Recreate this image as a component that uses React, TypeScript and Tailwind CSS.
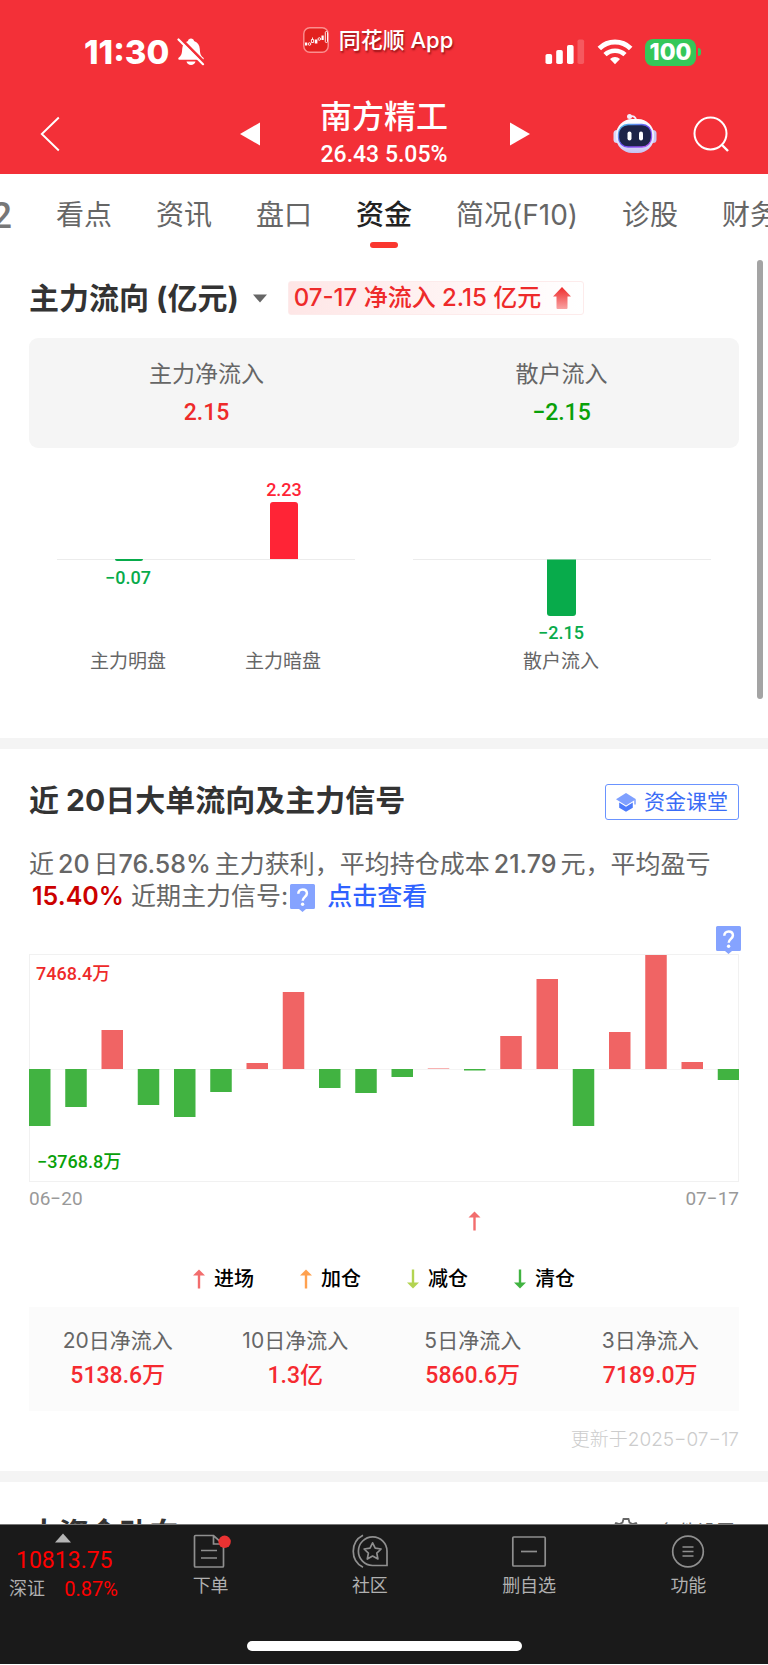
import React from "react";

const UI = "font-['Inter','Noto_Sans_CJK_SC',sans-serif]";
const NUM = "font-['Roboto','Noto_Sans_CJK_SC',sans-serif]";

/* ---------- icons ---------- */

function BellOff() {
  return (
    <svg width="28" height="30" viewBox="0 0 28 30" aria-hidden="true">
      <path
        d="M14 1.6c1.6 0 2.7.9 3 2.3 3.6 1.1 5.6 4 5.8 8 .2 4.600.9 6.800 3.600 8.900.6.5.4 1.900-.6 1.900H2.200c-1 0-1.200-1.400-.6-1.900 2.700-2.100 3.400-4.300 3.600-8.900.2-4 2.200-6.900 5.800-8 .3-1.400 1.400-2.300 3-2.300z"
        fill="#fff"
      />
      <path d="M9.500 24.500h9c-.6 2.200-2.200 3.600-4.500 3.600s-3.900-1.400-4.500-3.600z" fill="#fff" />
      <path d="M3.500 1.500 29 27" stroke="#f33038" strokeWidth="3" />
      <path d="M1.500 2.500 26 27.200" stroke="#fff" strokeWidth="2.200" strokeLinecap="round" />
    </svg>
  );
}

function AppLogo() {
  return (
    <svg width="26" height="26" viewBox="0 0 26 26" aria-hidden="true">
      <rect x="0.800" y="0.800" width="24.400" height="24.400" rx="6" fill="#e2211f" stroke="#fb8f8f" strokeWidth="1.400" />
      <g fill="#fff">
        <rect x="2" y="15.500" width="2.200" height="3" />
        <rect x="11.800" y="12.500" width="2.600" height="4" />
        <rect x="18.500" y="8.500" width="2.200" height="4.500" />
      </g>
      <g fill="none" stroke="#fff" strokeWidth="0.900">
        <circle cx="6.500" cy="17" r="1.300" />
        <path d="M9.500 10.500v1.500M8.400 12.500h2.200v3H8.400z" />
        <circle cx="16.300" cy="12" r="1.300" />
        <rect x="22.300" y="4.500" width="2.200" height="11" rx="1" />
      </g>
    </svg>
  );
}

function Signal() {
  return (
    <svg width="40" height="26" viewBox="0 0 40 26" fill="#fff" aria-hidden="true">
      <rect x="0.500" y="15" width="6.600" height="10" rx="1.800" />
      <rect x="11.200" y="11" width="6.600" height="14" rx="1.800" />
      <rect x="22" y="6" width="6.600" height="19" rx="1.800" />
      <rect x="32.500" y="0.500" width="6.600" height="24.500" rx="1.800" opacity="0.200" />
    </svg>
  );
}

function Wifi() {
  return (
    <svg width="36" height="26" viewBox="0 0 36 26" aria-hidden="true">
      <path d="M2.300 9.500a22.500 22.500 0 0 1 31.400 0" fill="none" stroke="#fff" strokeWidth="5" />
      <path d="M8 15.700a14.500 14.500 0 0 1 20 0" fill="none" stroke="#fff" strokeWidth="4.600" />
      <path d="M18 25.200l-5-5.200a7.200 7.200 0 0 1 10 0z" fill="#fff" />
    </svg>
  );
}

function Robot() {
  return (
    <svg width="44" height="42" viewBox="0 0 44 42" aria-hidden="true">
      <defs>
        <linearGradient id="shell" x1="0" y1="0" x2="0" y2="1">
          <stop offset="0" stopColor="#ffffff" />
          <stop offset="0.600" stopColor="#ecebff" />
          <stop offset="1" stopColor="#c5c3f3" />
        </linearGradient>
        <linearGradient id="rim" x1="0" y1="0" x2="1" y2="1">
          <stop offset="0" stopColor="#4fc8e8" />
          <stop offset="0.500" stopColor="#6a4cf0" />
          <stop offset="1" stopColor="#b25af2" />
        </linearGradient>
      </defs>
      <path d="M17 3.500c3-1 5.500 0 6.300 4" fill="none" stroke="#f3eefc" strokeWidth="1.800" />
      <circle cx="16.500" cy="3.500" r="2.500" fill="#f3eefc" />
      <rect x="0.500" y="17" width="7" height="13" rx="3.500" fill="#d9d8f8" />
      <rect x="36.500" y="17" width="7" height="13" rx="3.500" fill="#c9c7f2" />
      <rect x="3" y="6" width="38" height="34" rx="16" fill="url(#shell)" />
      <rect x="5.500" y="11.500" width="33" height="22.500" rx="9.500" fill="#1d2448" stroke="url(#rim)" strokeWidth="1.300" />
      <rect x="14.500" y="18.500" width="4" height="9" rx="2" fill="#fff" />
      <rect x="26" y="18.500" width="4" height="9" rx="2" fill="#fff" />
    </svg>
  );
}

function HelpBubble() {
  return (
    <svg width="25" height="28" viewBox="0 0 25 28" aria-hidden="true" className="block">
      <path d="M1.500 0h22a1.500 1.500 0 0 1 1.500 1.500v22a1.500 1.500 0 0 1-1.500 1.500H16l-3.500 3L9 25H1.500A1.500 1.500 0 0 1 0 23.500v-22A1.500 1.500 0 0 1 1.500 0z" fill="#85a3ff" />
      <path d="M8.300 9.800c0-2.500 1.800-4.300 4.300-4.300s4.300 1.600 4.300 4c0 3.200-4.200 3.600-4.200 7.200" fill="none" stroke="#fff" strokeWidth="2.500" />
      <circle cx="12.600" cy="20.200" r="1.700" fill="#fff" />
    </svg>
  );
}

function Cap() {
  return (
    <svg width="20" height="19" viewBox="0 0 20 19" aria-hidden="true">
      <path d="M10 0 20 6.200 10 12.400 0 6.200z" fill="#7fa0ff" />
      <path d="M3.200 9.500 10 13.700l6.800-4.200v5.300L10 18.800l-6.800-4z" fill="#4d7bfb" />
      <path d="M19 6.500v5" stroke="#7fa0ff" strokeWidth="1.500" />
    </svg>
  );
}

function SignalArrow({ color, down = false }: { color: string; down?: boolean }) {
  return (
    <svg width="12" height="20" viewBox="0 0 12 20" aria-hidden="true">
      <g transform={down ? "rotate(180 6 10)" : undefined} fill={color}>
        <path d="M6 0.500 12 6.500H0z" />
        <rect x="4.800" y="5" width="2.400" height="14.500" />
      </g>
    </svg>
  );
}

function OrderIcon() {
  return (
    <svg width="40" height="36" viewBox="0 0 40 36" aria-hidden="true">
      <g fill="none" stroke="#8f8f8f" strokeWidth="1.700">
        <path d="M22.500 2.500H4.500a1 1 0 0 0-1 1V33a1 1 0 0 0 1 1h27a1 1 0 0 0 1-1V11.500zM22.500 2.500v8.500h9.500" />
        <path d="M10 17.500h16M10 25h16" />
      </g>
      <circle cx="33.600" cy="8.800" r="6.200" fill="#ea3232" />
    </svg>
  );
}

function CommunityIcon() {
  return (
    <svg width="40" height="36" viewBox="0 0 40 36" aria-hidden="true" fill="none" stroke="#8f8f8f" strokeWidth="1.700">
      <path d="M13 2.200a18 18 0 0 0 0 32" />
      <path d="M37 32.500H22.500a14.300 14.300 0 1 1 14.500-14.300z" />
      <path d="m22.600 9.800 2.600 5.400 5.900.8-4.300 4.100 1.100 5.900-5.300-2.900-5.300 2.900 1.100-5.900-4.300-4.100 5.900-.8z" strokeLinejoin="round" />
    </svg>
  );
}

function RemoveIcon() {
  return (
    <svg width="40" height="36" viewBox="0 0 40 36" aria-hidden="true" fill="none" stroke="#8f8f8f" strokeWidth="1.700">
      <rect x="3.800" y="4" width="32.400" height="29" rx="1" />
      <path d="M12 18.500h16" />
    </svg>
  );
}

function MenuIcon() {
  return (
    <svg width="40" height="36" viewBox="0 0 40 36" aria-hidden="true" fill="none" stroke="#8f8f8f" strokeWidth="1.700">
      <circle cx="20" cy="18.500" r="15.300" />
      <path d="M14.500 14h11M14.500 18.500h11M14.500 23h11" />
    </svg>
  );
}

/* ---------- data ---------- */

const tabs = ["看点", "资讯", "盘口", "资金", "简况(F10)", "诊股", "财务"];

// Daily large-order net flow, as chart units above (+) or below (-) the zero line.
const flows = [-57, -38, 39, -36, -48, -23, 6, 77, -19, -24, -8, 0.5, -1.5, 33, 90, -57, 37, 114, 7, -11];

const legend = [
  { label: "进场", color: "#f26d6d", down: false },
  { label: "加仓", color: "#ffa14f", down: false },
  { label: "减仓", color: "#b3d452", down: true },
  { label: "清仓", color: "#41b341", down: true },
];

const totals = [
  { label: "20日净流入", value: "5138.6万" },
  { label: "10日净流入", value: "1.3亿" },
  { label: "5日净流入", value: "5860.6万" },
  { label: "3日净流入", value: "7189.0万" },
];

const navItems = [
  { label: "下单", Icon: OrderIcon },
  { label: "社区", Icon: CommunityIcon },
  { label: "删自选", Icon: RemoveIcon },
  { label: "功能", Icon: MenuIcon },
];

/* ---------- sections ---------- */

function Header() {
  return (
    <header className="bg-[#f33038] text-white">
      <div className="grid h-[88px] grid-cols-[1fr_auto_1fr]">
        <div className="mt-9 flex h-8 items-center gap-2 pl-[84px]">
          <span className="text-[33px] leading-8 font-extrabold">11:30</span>
          <BellOff />
        </div>
        <div className="mt-6 flex h-8 items-center gap-[10px] pr-3">
          <AppLogo />
          <span className="text-[22px] leading-8 font-medium [text-shadow:1px_2px_2px_rgba(90,0,0,0.6)]">同花顺 App</span>
        </div>
        <div className="mt-9 flex h-8 items-center justify-end gap-3 pr-[67px]">
          <Signal />
          <Wifi />
          <div className="flex items-center gap-[2px]">
            <span className="flex h-[27px] w-[51px] items-center justify-center rounded-lg bg-[#34c759] text-[23px] leading-[27px] font-extrabold">
              100
            </span>
            <span className="h-2 w-[3px] rounded-r-full bg-[#34c759]" />
          </div>
        </div>
      </div>
      <div className="grid h-[86px] grid-cols-[1fr_auto_1fr] items-center pt-[6px]">
        <div className="flex items-center justify-between pr-[60px] pl-10">
          <button aria-label="返回">
            <svg width="20" height="36" viewBox="0 0 20 36" fill="none" stroke="#fff" strokeWidth="1.900" className="block">
              <path d="M18.800 1.500 1.800 18l17 16.500" />
            </svg>
          </button>
          <button aria-label="上一只">
            <svg width="20" height="24" viewBox="0 0 20 24" className="block">
              <path d="M0 12 20 0.500v23z" fill="#fff" />
            </svg>
          </button>
        </div>
        <div className="flex flex-col items-center gap-[2px]">
          <h1 className="text-[32px] leading-10 font-medium">南方精工</h1>
          <p className={`text-[23px] leading-8 font-medium ${NUM}`}>26.43 5.05%</p>
        </div>
        <div className="flex items-center pr-[38px] pl-[62px]">
          <button aria-label="下一只">
            <svg width="20" height="24" viewBox="0 0 20 24" className="block">
              <path d="M20 12 0 0.500v23z" fill="#fff" />
            </svg>
          </button>
          <button aria-label="智能助手" className="ml-auto">
            <Robot />
          </button>
          <button aria-label="搜索" className="ml-9">
            <svg width="37" height="37" viewBox="0 0 37 37" fill="none" stroke="#fff" strokeWidth="2" className="block">
              <circle cx="17.500" cy="17.500" r="16" />
              <path d="m28.500 28.500 6.500 6.500" strokeWidth="2.400" />
            </svg>
          </button>
        </div>
      </div>
    </header>
  );
}

function Tabs() {
  return (
    <nav className="flex h-[83px] gap-11 overflow-hidden whitespace-nowrap text-[28px] leading-9 text-[#666]">
      <a href="#l2" className={`-ml-11 w-14 shrink-0 pt-[22px] text-right text-4xl font-medium text-[#777] ${NUM}`}>
        L2
      </a>
      {tabs.map((t) => (
        <a
          key={t}
          href={`#${t}`}
          className={
            t === "资金"
              ? "flex shrink-0 flex-col items-center pt-[23px] font-medium text-[#222]"
              : "shrink-0 pt-[23px]"
          }
        >
          {t}
          {t === "资金" && <span className="mt-[9px] h-[6px] w-7 rounded-full bg-[#fa372f]" />}
        </a>
      ))}
    </nav>
  );
}

function MainFlow() {
  return (
    <section className="px-[29px] pt-6 pb-[54px]">
      <div className="flex h-[34px] items-center">
        <h2 className="text-[30px] leading-[34px] font-bold text-[#333]">主力流向 (亿元)</h2>
        <button aria-label="切换单位" className="ml-[14px]">
          <svg width="14" height="9" viewBox="0 0 14 9" className="block">
            <path d="M0 0.500h14L7 8.500z" fill="#666" />
          </svg>
        </button>
        <div className="ml-[21px] flex h-[34px] items-center gap-3 rounded-[3px] border border-[#fdebeb] bg-linear-to-r from-[#fee6e6] to-white pr-3 pl-[5px] text-[#ee2a2a]">
          <span className="text-2xl leading-8 font-medium">07-17 净流入 2.15 亿元</span>
          <svg width="18" height="22" viewBox="0 0 18 22" aria-hidden="true">
            <defs>
              <linearGradient id="up" x1="0" y1="0" x2="0" y2="1">
                <stop offset="0" stopColor="#ee2a2a" />
                <stop offset="1" stopColor="#f9a3a3" />
              </linearGradient>
            </defs>
            <path d="M9 0 18 9.500h-3.500V21a1 1 0 0 1-1 1h-9a1 1 0 0 1-1-1V9.500H0z" fill="url(#up)" />
          </svg>
        </div>
      </div>

      <dl className="mt-[23px] grid h-[110px] grid-cols-2 rounded-[9px] bg-[#f5f5f5] pt-5 text-center">
        <div>
          <dt className="text-[23px] leading-8 text-[#666]">主力净流入</dt>
          <dd className={`mt-[7px] text-[23px] leading-8 font-medium text-[#ee2a2a] ${NUM}`}>2.15</dd>
        </div>
        <div>
          <dt className="text-[23px] leading-8 text-[#666]">散户流入</dt>
          <dd className={`mt-[7px] text-[23px] leading-8 font-medium text-[#09a009] ${NUM}`}>−2.15</dd>
        </div>
      </dl>

      <svg viewBox="0 0 710 236" className={`block w-full ${NUM}`} role="img" aria-label="主力与散户流向">
        <path d="M28 111.500h298M384 111.500h298" stroke="#ececec" />
        <path d="M86 111h28v0a2 2 0 0 1-2 2H88a2 2 0 0 1-2-2z" fill="#08ab4b" />
        <path d="M241 111V57a3 3 0 0 1 3-3h22a3 3 0 0 1 3 3v54z" fill="#ff2436" />
        <path d="M518 111.500h29V165a3 3 0 0 1-3 3h-23a3 3 0 0 1-3-3z" fill="#08ab4b" />
        <g textAnchor="middle" fontSize="18" fontWeight="500">
          <text x="255" y="48" fill="#ff2436">2.23</text>
          <text x="99" y="136" fill="#08ab4b">−0.07</text>
          <text x="532" y="191" fill="#08ab4b">−2.15</text>
        </g>
        <g textAnchor="middle" fontSize="19" fill="#666">
          <text x="99" y="220">主力明盘</text>
          <text x="254" y="220">主力暗盘</text>
          <text x="532" y="220">散户流入</text>
        </g>
      </svg>
    </section>
  );
}

function FlowChart() {
  return (
    <svg viewBox="0 0 710 228" className={`block w-full ${NUM}`} role="img" aria-label="近20日大单流向">
      <rect x="0.500" y="0.500" width="709" height="227" fill="none" stroke="#f1f1f1" />
      <path d="M0 115.500h710" stroke="#f4f4f4" />
      {flows.map((v, i) => (
        <rect
          key={i}
          x={i * 36.250}
          y={v > 0 ? 115 - v : 115}
          width="21.500"
          height={Math.abs(v)}
          fill={v > 0 ? "#f06464" : "#41b341"}
        />
      ))}
      <text x="7" y="26" fontSize="18" fontWeight="500" fill="#ee2a2a">7468.4万</text>
      <text x="8" y="214" fontSize="18" fontWeight="500" fill="#09a009">−3768.8万</text>
    </svg>
  );
}

function Signals() {
  return (
    <section className="px-[29px] pt-[35px] pb-[15px]">
      <div className="flex h-9 items-start justify-between">
        <h2 className="text-[30px] leading-8 font-bold text-[#333]">近 20日大单流向及主力信号</h2>
        <a
          href="#course"
          className="flex h-9 items-center gap-2 rounded-[3px] border border-[#6a93ff] px-[10px] text-[21px] text-[#3a6cf6]"
        >
          <Cap />
          资金课堂
        </a>
      </div>

      <p className="mt-7 text-[25px] leading-8 text-[#666]">
        近<span className="mx-1 font-medium">20</span>日<span className="mr-1 font-medium">76.58%</span>
        主力获利，平均持仓成本<span className="mx-1 font-medium">21.79</span>元，平均盈亏{" "}
        <strong className="ml-[3px] font-semibold text-[#cc0000]">15.40%</strong> 近期主力信号:
        <button aria-label="信号说明" className="ml-[2px] inline-block h-7 align-bottom">
          <HelpBubble />
        </button>
        <a href="#signals" className="ml-3 font-medium text-[#2f62ff]">点击查看</a>
      </p>

      <div className="mt-[14px] -mr-[2px] flex h-7 justify-end">
        <button aria-label="图表说明">
          <HelpBubble />
        </button>
      </div>
      <FlowChart />
      <div className={`flex h-[29px] items-end justify-between text-[19px] leading-6 text-[#999] ${NUM}`}>
        <time>06−20</time>
        <time>07−17</time>
      </div>
      <svg viewBox="0 0 710 20" className="block w-full" aria-hidden="true">
        <path d="M445.500 0.500 451.500 6.500h-12z" fill="#f26d6d" />
        <rect x="444.300" y="5" width="2.400" height="14.500" fill="#f26d6d" />
      </svg>

      <ul className="mt-8 flex h-8 items-center justify-center gap-[46px] text-xl leading-8 font-medium text-black">
        {legend.map((l) => (
          <li key={l.label} className="flex items-center gap-[9px]">
            <SignalArrow color={l.color} down={l.down} />
            {l.label}
          </li>
        ))}
      </ul>

      <dl className="mt-3 grid h-[104px] grid-cols-4 bg-[#fbfbfb] pt-[18px] text-center">
        {totals.map((t) => (
          <div key={t.label}>
            <dt className="text-[21px] leading-8 text-[#666]">{t.label}</dt>
            <dd className={`mt-[3px] text-[23px] leading-8 font-medium text-[#f52a30] ${NUM}`}>{t.value}</dd>
          </div>
        ))}
      </dl>
      <p className="mt-[13px] text-right text-[19px] leading-8 font-light text-[#ccc]">更新于2025−07−17</p>
    </section>
  );
}

function BigMoney() {
  return (
    <section className="flex h-[42px] items-start justify-between overflow-hidden px-[29px] pt-[33px]">
      <h2 className="text-[30px] leading-9 font-bold text-[#333]">大资金动向</h2>
      <button className="flex shrink-0 items-start gap-5 pr-1 text-[19px] leading-9 text-[#666]">
        <svg width="26" height="26" viewBox="0 0 26 26" fill="none" stroke="#666" strokeWidth="1.800" className="mt-[2px]">
          <path d="M10.500 2h5l1 3.500 3 1.500 3.500-1 2 4-2.500 3 2.500 3-2 4.500-3.500-1-3 1.500-1 3.500h-5l-1-3.500-3-1.500-3.500 1-2-4.500 2.500-3-2.500-3 2-4 3.500 1 3-1.500z" />
          <circle cx="13" cy="13" r="4" />
        </svg>
        条件设置
      </button>
    </section>
  );
}

function BottomNav() {
  return (
    <nav className="border-t border-[#777] bg-[#1a1a1a] text-[#b0b0b0]">
      <div className="flex h-[116px] pt-2">
        <a href="#index" className="flex w-[131px] shrink-0 flex-col">
          <svg width="16" height="10" viewBox="0 0 16 10" className="ml-[55px]" aria-hidden="true">
            <path d="M8 0.500 16 9.500H0z" fill="#b5b5b5" />
          </svg>
          <span className={`mt-[2px] ml-4 text-[23px] leading-8 text-[#ff0000] ${NUM}`}>10813.75</span>
          <span className="flex items-center justify-between pr-[13px] pl-[9px] leading-6">
            <span className="text-[18px]">深证</span>
            <span className={`text-[20px] text-[#ff0000] ${NUM}`}>0.87%</span>
          </span>
        </a>
        {navItems.map(({ label, Icon }) => (
          <button key={label} className="flex flex-1 flex-col items-center text-[18px] leading-6">
            <Icon />
            <span className="mt-[5px]">{label}</span>
          </button>
        ))}
      </div>
      <div className="flex h-[23px] items-start justify-center">
        <span className="h-[10px] w-[275px] rounded-full bg-white" />
      </div>
    </nav>
  );
}

export default function App() {
  return (
    <div className={`relative bg-white ${UI}`}>
      <Header />
      <Tabs />
      <main>
        <MainFlow />
        <hr className="h-[11px] border-0 bg-[#f4f4f4]" />
        <Signals />
        <hr className="h-[11px] border-0 bg-[#f4f4f4]" />
        <BigMoney />
      </main>
      <BottomNav />
      <div className="absolute top-[260px] right-[5px] h-[439px] w-[6px] rounded-full bg-[#a4a4a4]" />
    </div>
  );
}
